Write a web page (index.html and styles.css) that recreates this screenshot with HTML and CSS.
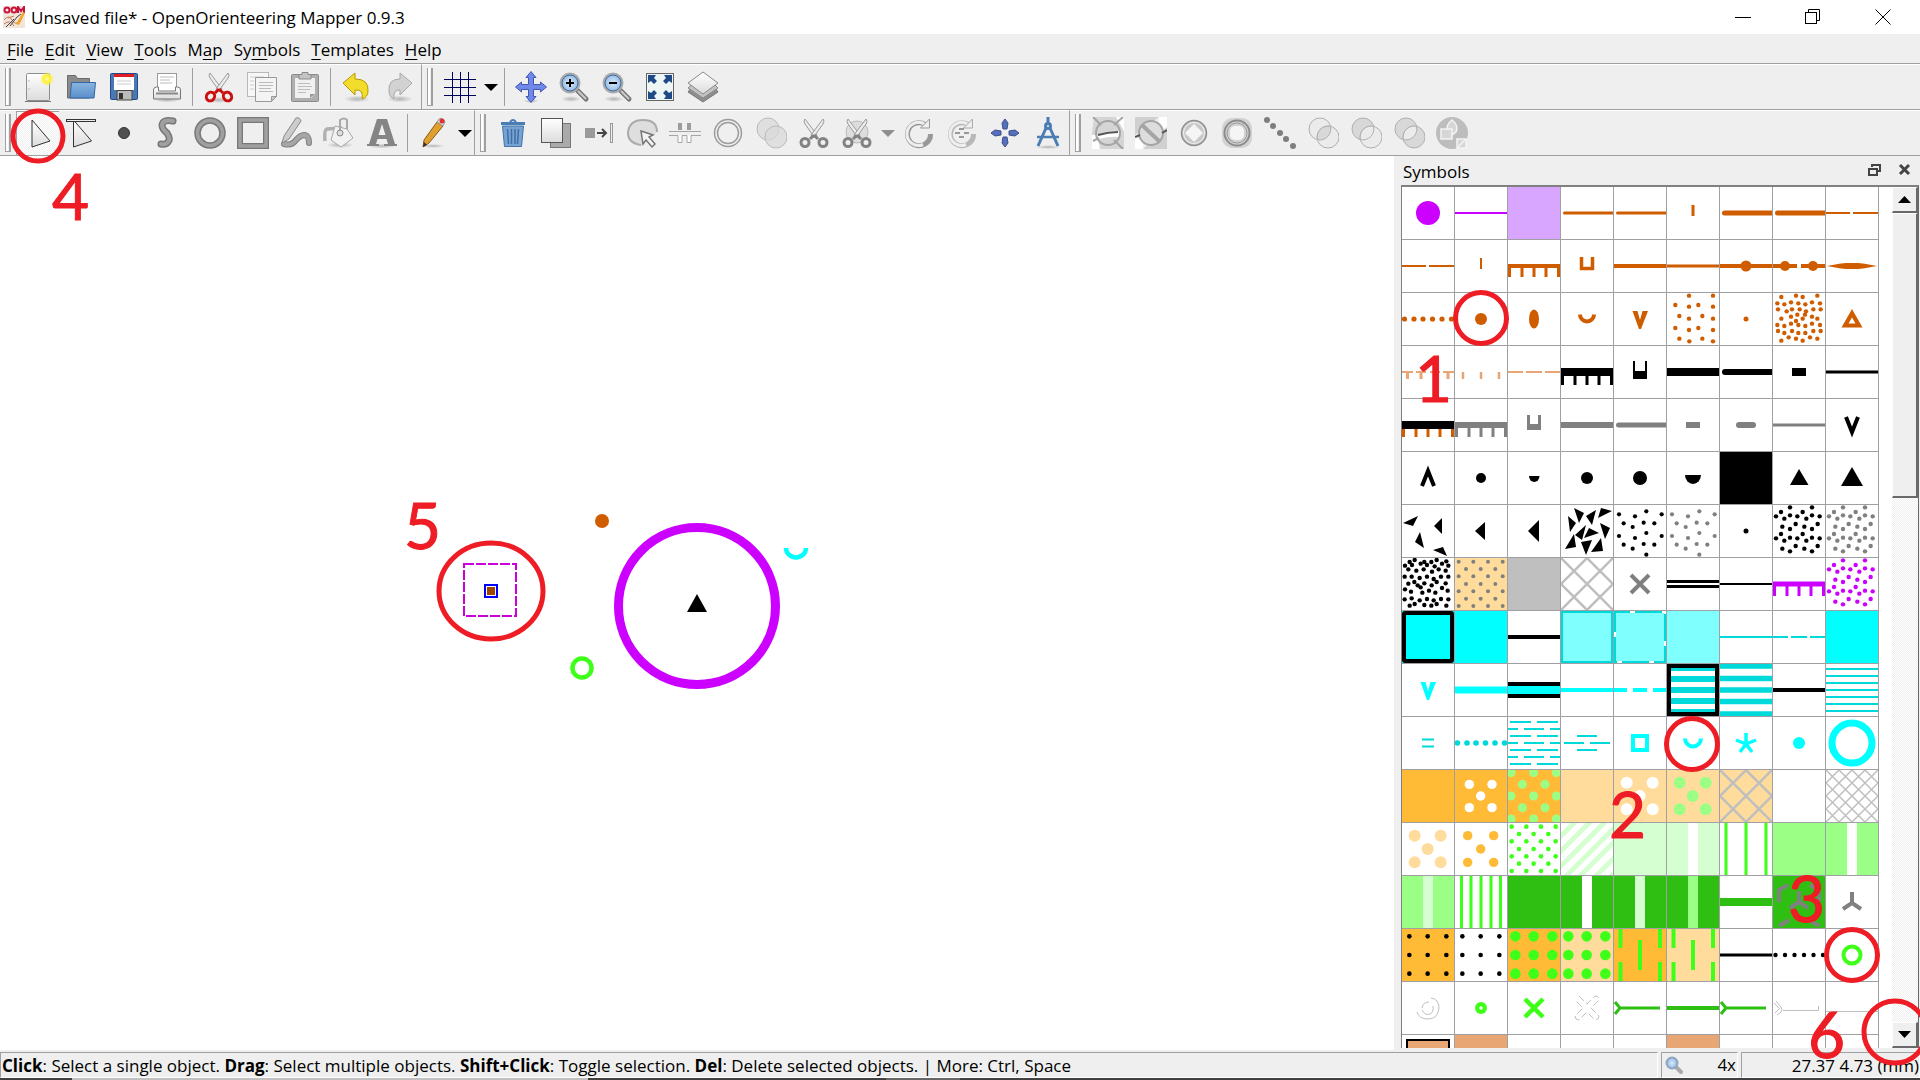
FILE: index.html
```html
<!DOCTYPE html>
<html lang="en">
<head>
<meta charset="utf-8">
<title>Unsaved file* - OpenOrienteering Mapper 0.9.3</title>
<link rel="stylesheet" href="styles.css">
</head>
<body>
<svg class="defs" aria-hidden="true">
  <defs>
    <linearGradient id="paper" x2="0" y2="1"><stop offset="0" stop-color="#fff"/><stop offset="1" stop-color="#dcdcdc"/></linearGradient>
    <linearGradient id="blue" x2="0" y2="1"><stop offset="0" stop-color="#8ab4e0"/><stop offset="1" stop-color="#5a8fcb"/></linearGradient>
    <radialGradient id="glow"><stop offset="0" stop-color="#fffcb0"/><stop offset=".5" stop-color="#fdf02c"/><stop offset="1" stop-color="#fdf02c" stop-opacity="0"/></radialGradient>
    <radialGradient id="lens"><stop offset="0" stop-color="#dcebfa"/><stop offset="1" stop-color="#8fb6e2"/></radialGradient>
    <radialGradient id="shade"><stop offset="0" stop-color="#000" stop-opacity=".25"/><stop offset="1" stop-color="#000" stop-opacity="0"/></radialGradient>
    <g id="blades" fill="#ececec" stroke="#9a9a9a"><path d="M7 2q-2 2 0 5l10 14 2-3z"/><path d="M25 2q2 2 0 5L15 21l-2-3z"/></g>
    <g id="discs" stroke="#b9b9b9"><circle cx="13" cy="12" r="11" fill="#d9d9d9" fill-opacity=".7"/><circle cx="21" cy="20" r="11" fill="#d9d9d9" fill-opacity=".7"/></g>
  </defs>
</svg>

<header class="titlebar">
  <svg class="logo" width="22" height="22" viewBox="0 0 22 22"><rect width="22" height="22" fill="#f2e4d8"/><g fill="none" stroke="#c8143c" stroke-width="2"><circle cx="4" cy="4" r="2.5"/><circle cx="11" cy="4" r="2.5"/><path d="M15 7V1l3 4 3-4v6"/></g><path d="M1 14q5-6 8 0t9 1M1 18q6-5 10 2M5 12l6-2" stroke="#c77b5c" fill="none"/><path d="M7 20l7-9 4-3M3 21l8-8" stroke="#444" fill="none"/><path d="M13 18l7-12 2 1-6 12z" fill="#f0a32a"/></svg>
  <h1>Unsaved file* - OpenOrienteering Mapper 0.9.3</h1>
  <div class="window-buttons">
    <button aria-label="Minimize"><svg width="16" height="16"><path d="M0 8.500h16" stroke="#000"/></svg></button>
    <button aria-label="Restore"><svg width="16" height="16" fill="none" stroke="#000"><rect x=".5" y="3.500" width="11" height="11"/><path d="M3.500 3V.5h11v11H12"/></svg></button>
    <button aria-label="Close"><svg width="16" height="16"><path d="M.5 .5l15 15M15.500.5l-15 15" stroke="#000"/></svg></button>
  </div>
</header>

<nav class="menubar">
  <button><u>F</u>ile</button><button><u>E</u>dit</button><button><u>V</u>iew</button><button><u>T</u>ools</button><button>M<u>a</u>p</button><button>Sy<u>m</u>bols</button><button><u>T</u>emplates</button><button><u>H</u>elp</button>
</nav>

<div class="toolrow">
  <div class="toolbar">
    <button aria-label="New"><svg viewBox="0 0 32 32"><rect x="4.500" y="2.500" width="23" height="27" rx="1" fill="url(#paper)" stroke="#8e8e8e"/><path d="M3 30.500h26" stroke="#777"/><path d="M7 9v2m0 6v2" stroke="#bbb"/><circle cx="25" cy="8" r="7" fill="url(#glow)"/></svg></button>
    <button aria-label="Open"><svg viewBox="0 0 32 32"><path d="M2.500 27V4.500h8l2 3h12V27z" fill="#8b8b8b" stroke="#6b6b6b"/><path d="M6.500 11.500h24l-1.500 15.500H5z" fill="url(#blue)" stroke="#3465a4"/></svg></button>
    <button aria-label="Save"><svg viewBox="0 0 32 32"><rect x="2.500" y="2.500" width="27" height="26" rx="1" fill="#4a78b5" stroke="#204a87"/><rect x="6" y="3" width="20" height="16" fill="#fff"/><path d="M6 4.500h20" stroke="#e02020" stroke-width="3"/><path d="M9 10h14M9 13h14" stroke="#ccc"/><rect x="9" y="19.500" width="15" height="9.500" fill="#bbb" stroke="#444"/><rect x="11" y="22" width="4" height="6" fill="#333"/></svg></button>
    <button aria-label="Print"><svg viewBox="0 0 32 32"><ellipse cx="16" cy="29" rx="14" ry="2.500" fill="url(#shade)"/><rect x="6.500" y="2.500" width="19" height="18" fill="#fff" stroke="#999"/><path d="M9 6h14M9 9h10M9 12h12" stroke="#bbb"/><path d="M2.500 19q0-3 3-3h2v4h17v-4h2q3 0 3 3v9h-27z" fill="url(#paper)" stroke="#777"/><path d="M5 22.500h22" stroke="#888" stroke-width="2"/></svg></button>
    <hr>
    <button aria-label="Cut"><svg viewBox="0 0 32 32"><ellipse cx="16" cy="29" rx="13" ry="3" fill="url(#shade)"/><use href="#blades"/><g fill="none" stroke="#cc1010" stroke-width="3"><path d="M16 18l-4 4M16 18l4 4"/><ellipse cx="7.500" cy="25.500" rx="4" ry="4.500" transform="rotate(35 7.500 25.500)"/><ellipse cx="24.500" cy="25.500" rx="4" ry="4.500" transform="rotate(-35 24.500 25.500)"/></g></svg></button>
    <button aria-label="Copy"><svg viewBox="0 0 32 32"><rect x="1.500" y="1.500" width="21" height="24" fill="#f7f7f7" stroke="#b8b8b8"/><path d="M4 6h14M4 10h4M4 14h4M4 18h4" stroke="#ccc"/><path d="M9.500 6.500h21v19l-5 5h-16z" fill="#f4f4f4" stroke="#999"/><path d="M13 11.500h14M13 14.500h14M13 17.500h12M13 20.500h14" stroke="#bbb"/><path d="M25.500 30v-4.500h5z" fill="#ccc" stroke="#999"/></svg></button>
    <button aria-label="Paste"><svg viewBox="0 0 32 32"><rect x="2.500" y="3.500" width="27" height="27" rx="1" fill="#aeaeae" stroke="#8c8c8c"/><path d="M6 7h20v16l-4 4H6z" fill="#f0f0f0"/><path d="M10 3.500h3v-2h6v2h3V8H10z" fill="#c5c5c5" stroke="#8a8a8a"/><path d="M9 12.500h12M9 15.500h14M9 18.500h12M9 21.500h8" stroke="#bdbdbd"/><path d="M21 27v-4h5z" fill="#999"/></svg></button>
    <hr>
    <button aria-label="Undo"><svg viewBox="0 0 32 32"><ellipse cx="16" cy="28" rx="13" ry="3.500" fill="url(#shade)"/><path d="M2 12L14 2v6q14 0 13 12 0 6-6 8 2-10-7-9v5z" fill="#f2dc2c" stroke="#b79a00"/></svg></button>
    <button aria-label="Redo"><svg viewBox="0 0 32 32"><ellipse cx="16" cy="28" rx="13" ry="3.500" fill="url(#shade)"/><path d="M28 12L16 2v6Q4 8 5 20q0 6 5 8-1-10 6-9v5z" fill="#d2d2d2" stroke="#a8a8a8"/></svg></button>
  </div>
  <div class="toolbar wide">
    <button aria-label="Grid"><svg viewBox="0 0 32 32"><path d="M0 8.500h32M0 16.500h32M0 24.500h32M8.500 1v31M16.500 1v31M24.500 1v31" stroke="#00005c"/></svg></button>
    <button class="drop" aria-label="Grid options"><svg viewBox="0 0 14 7"><path d="M0 0h14L7 7z"/></svg></button>
    <hr>
    <button aria-label="Pan"><svg viewBox="0 0 32 32"><ellipse cx="16" cy="30" rx="8" ry="2" fill="url(#shade)"/><path d="M16 .5l5 6h-2.500v7h7V11l6 5-6 5v-2.500h-7v7H21l-5 6-5-6h2.500v-7h-7V21l-6-5 6-5v2.500h7v-7H11z" fill="#7088e8" stroke="#4256b4"/></svg></button>
    <button aria-label="Zoom in"><svg viewBox="0 0 32 32"><ellipse cx="13" cy="28" rx="10" ry="3" fill="url(#shade)"/><path d="M19 19l9 9" stroke="#777" stroke-width="5" stroke-linecap="round"/><path d="M20 20l8 8" stroke="#ccc" stroke-width="2"/><circle cx="12" cy="12" r="9" fill="url(#lens)" stroke="#aaa" stroke-width="3"/><circle cx="12" cy="12" r="8" fill="none" stroke="#3b6fae"/><path d="M8 12h8M12 8v8" stroke="#000" stroke-width="2"/></svg></button>
    <button aria-label="Zoom out"><svg viewBox="0 0 32 32"><ellipse cx="13" cy="28" rx="10" ry="3" fill="url(#shade)"/><path d="M19 19l9 9" stroke="#777" stroke-width="5" stroke-linecap="round"/><path d="M20 20l8 8" stroke="#ccc" stroke-width="2"/><circle cx="12" cy="12" r="9" fill="url(#lens)" stroke="#aaa" stroke-width="3"/><circle cx="12" cy="12" r="8" fill="none" stroke="#3b6fae"/><path d="M8 12h8" stroke="#000" stroke-width="2"/></svg></button>
    <button aria-label="Show whole map"><svg viewBox="0 0 32 32"><rect x="2.500" y="2.500" width="27" height="27" fill="#eef5f5" stroke="#666"/><path d="M4 4h8l-2 3 3 3-3 3-3-3-3 2zM28 4h-8l2 3-3 3 3 3 3-3 3 2zM4 28h8l-2-3 3-3-3-3-3 3-3-2zM28 28h-8l2-3-3-3 3-3 3 3 3-2z" fill="#204a87"/></svg></button>
    <button aria-label="Map layers"><svg viewBox="0 0 32 32"><path d="M16 31L1 21l3-4h24l3 4z" fill="#8e8e8e" stroke="#777"/><path d="M16 27L1 17l3-3h24l3 3z" fill="#c2c2c2" stroke="#8a8a8a"/><path d="M16 23L1 12 16 1l15 11z" fill="url(#paper)" stroke="#8a8a8a"/></svg></button>
  </div>
</div>

<div class="toolrow">
  <div class="toolbar">
    <button class="pressed" aria-label="Edit objects"><svg viewBox="0 0 32 32"><path d="M10 3v27l18-6z" fill="url(#paper)" stroke="#333"/></svg></button>
    <button aria-label="Edit lines"><svg viewBox="0 0 32 32"><path d="M8.500 3v27l18-6z" fill="url(#paper)" stroke="#333"/><rect x="1.500" y="2.500" width="29" height="2" fill="#eee" stroke="#333"/></svg></button>
    <button aria-label="Draw point"><svg viewBox="0 0 32 32"><circle cx="16" cy="16" r="5.500" fill="#505050" stroke="#333"/></svg></button>
    <button aria-label="Draw path"><svg viewBox="0 0 32 32"><g fill="none" stroke-linecap="round"><path d="M22 4q-10-2-11 4 0 4 5 8 4 6 1 9-2 3-7 2" stroke="#777" stroke-width="7"/><path d="M22 4q-10-2-11 4 0 4 5 8 4 6 1 9-2 3-7 2" stroke="#a0a0a0" stroke-width="4"/></g></svg></button>
    <button aria-label="Draw circle"><svg viewBox="0 0 32 32" fill="none"><circle cx="16" cy="16" r="12.500" stroke="#787878" stroke-width="6.500"/><circle cx="16" cy="16" r="12.500" stroke="#a0a0a0" stroke-width="3.500"/></svg></button>
    <button aria-label="Draw rectangle"><svg viewBox="0 0 32 32" fill="none"><rect x="3" y="3" width="26" height="26" stroke="#787878" stroke-width="6"/><rect x="3" y="3" width="26" height="26" stroke="#a0a0a0" stroke-width="3.500"/></svg></button>
    <button aria-label="Draw freehand"><svg viewBox="0 0 32 32"><g fill="none" stroke-linecap="round"><path d="M4 27q8 2 12-4 6-7 11-4 2 2 2 7" stroke="#808080" stroke-width="6"/><path d="M4 27q8 2 12-4 6-7 11-4 2 2 2 7" stroke="#a6a6a6" stroke-width="4"/></g><path d="M16 1q4-1 5 3L9 22l-7 4 2-7z" fill="#ccc" stroke="#888"/></svg></button>
    <button aria-label="Paint bucket"><svg viewBox="0 0 32 32"><ellipse cx="17" cy="28" rx="14" ry="3" fill="url(#shade)"/><path d="M2 24q-1-11 2-12l15-1" fill="none" stroke="#b0b0b0" stroke-width="3.500"/><path d="M12 9l12 3 6 9-12 9-10-7z" fill="#f2f2f2" stroke="#aaa"/><path d="M17 13V3q4-3 7 0v9" fill="none" stroke="#aaa" stroke-width="2"/><circle cx="17" cy="16" r="3" fill="#ddd" stroke="#888"/></svg></button>
    <button aria-label="Write text"><svg viewBox="0 0 32 32"><ellipse cx="16" cy="29" rx="14" ry="2.500" fill="url(#shade)"/><path d="M11 2h10l8 25h2v2H18v-2h4l-1.500-5h-9L10 27h3v2H1v-2h2zM16 7l-3.500 11h7z" fill="#858585" fill-rule="evenodd"/></svg></button>
    <hr>
    <button aria-label="Pencil"><svg viewBox="0 0 32 32"><ellipse cx="15" cy="29" rx="12" ry="2" fill="url(#shade)"/><path d="M19 5l6 4L11 26l-6 4 1-7z" fill="#e0a030" stroke="#8a5a10"/><path d="M19 5l2-3q4-2 6 3l-2 4z" fill="#d8d8d8" stroke="#999"/><circle cx="24" cy="4" r="2.500" fill="#e23232"/><path d="M5 30l1-5 3 3z" fill="#333"/></svg></button>
    <button class="drop" aria-label="Pencil options"><svg viewBox="0 0 14 7"><path d="M0 0h14L7 7z"/></svg></button>
  </div>
  <div class="toolbar">
    <button aria-label="Delete"><svg viewBox="0 0 32 32"><path d="M5.500 9h21l-2 20.500h-17z" fill="#77a3d3" stroke="#4273a9"/><path d="M10.500 12l1 15M14.500 12v15M18 12v15M21.500 12l-1 15" stroke="#3f6fa8" stroke-width="1.500"/><path d="M4 6.500h24" stroke="#4b7db5" stroke-width="3"/><path d="M13 5q3-4 6 0" stroke="#4b7db5" fill="none" stroke-width="2"/></svg></button>
    <button aria-label="Duplicate"><svg viewBox="0 0 32 32"><rect x="10.500" y="6.500" width="20" height="24" fill="#aaa" stroke="#777"/><rect x="1.500" y="1.500" width="21" height="24" fill="url(#paper)" stroke="#555"/></svg></button>
    <button aria-label="Switch symbol"><svg viewBox="0 0 32 32"><rect x="2" y="11" width="10" height="10" fill="#9a9a9a"/><path d="M14 16h8M19 12l4 4-4 4" fill="none" stroke="#444" stroke-width="2"/><rect x="27.500" y="6.500" width="2" height="19" fill="#eee" stroke="#999"/></svg></button>
    <button aria-label="Fill"><svg viewBox="0 0 32 32"><path d="M15 28Q2 26 2 16 3 3 17 3t14 12" fill="#dedede" stroke="#aaa" stroke-width="2"/><path d="M15 14l12 4-4 2 6 7-3 3-6-7-3 4z" fill="#f4f4f4" stroke="#777" stroke-width="1.500"/></svg></button>
    <button aria-label="Switch dashes"><svg viewBox="0 0 32 32"><path d="M0 14.500h32M0 18.500h9v7h4v-7h5v7h4v-7h10" fill="#fff" stroke="#a5a5a5"/><path d="M9 6h4v7H9zM18 6h4v7h-4z" fill="#9c9c9c"/></svg></button>
    <button aria-label="Connect"><svg viewBox="0 0 32 32" fill="none" stroke="#9c9c9c"><circle cx="16" cy="16" r="13.500" stroke-width="1.500"/><circle cx="16" cy="16" r="10.500" stroke-width="1.500"/></svg></button>
    <button aria-label="Boolean union"><svg viewBox="0 0 32 32"><use href="#discs"/></svg></button>
    <button aria-label="Cut object"><svg viewBox="0 0 32 32"><use href="#blades"/><g fill="none" stroke="#828282" stroke-width="3"><path d="M16 18l-4 4M16 18l4 4"/><circle cx="7" cy="25.500" r="4"/><circle cx="25" cy="25.500" r="4"/></g></svg></button>
    <button aria-label="Cut hole"><svg viewBox="0 0 32 32"><circle cx="16" cy="15" r="11" fill="#ddd" stroke="#bbb"/><use href="#blades"/><g fill="none" stroke="#828282" stroke-width="3"><path d="M16 18l-4 4M16 18l4 4"/><circle cx="7" cy="25.500" r="4"/><circle cx="25" cy="25.500" r="4"/></g></svg></button>
    <button class="drop off" aria-label="Cut hole options"><svg viewBox="0 0 14 7"><path d="M0 0h14L7 7z"/></svg></button>
    <button aria-label="Rotate"><svg viewBox="0 0 32 32" fill="none"><path d="M22 7.500A11.500 11.500 0 1 0 27.500 17" stroke="#999" stroke-width="5"/><path d="M22 7.500A11.500 11.500 0 1 0 20 27.500" stroke="#eee" stroke-width="3"/><path d="M26.500 2v9h-9z" fill="#eee" stroke="#999"/></svg></button>
    <button aria-label="Rotate pattern"><svg viewBox="0 0 32 32" fill="none"><path d="M22 7.500A11.500 11.500 0 1 0 27.500 17" stroke="#b8b8b8" stroke-width="5"/><path d="M22 7.500A11.500 11.500 0 1 0 20 27.500" stroke="#eee" stroke-width="3"/><path d="M26.500 2v9h-9z" fill="#eee" stroke="#aaa"/><path d="M13 12h5M9 16h5M18 16h5M13 20h5" stroke="#999" stroke-width="2"/></svg></button>
    <button aria-label="Scale"><svg viewBox="0 0 32 32" fill="#5870bc" stroke="#3c4f8e"><path d="M16 2l3 4-1 6h-4l-1-6zM16 30l3-4-1-6h-4l-1 6zM2 16l4-3 6 1v4l-6 1zM30 16l-4-3-6 1v4l6 1z"/></svg></button>
    <button aria-label="Measure"><svg viewBox="0 0 32 32" fill="none" stroke="#4b7db5" stroke-width="3"><ellipse cx="16" cy="30" rx="13" ry="2" fill="url(#shade)" stroke="none"/><path d="M16 0v8M14 11L6 29M18 11l8 18"/><circle cx="16" cy="9" r="2.500"/><path d="M5 20h22" stroke-width="2.500"/></svg></button>
  </div>
  <div class="toolbar wide">
    <button aria-label="Cut away"><svg viewBox="0 0 32 32"><path d="M2 0h22l8 14v18H8q-8-6-8-16z" fill="#d5d5d5"/><path d="M24 0h8v14zM0 18h5q2 8 3 14H0z" fill="#fff"/><path d="M5 18q11-5 22-4v6q-12-1-22 3z" fill="#fff"/><g fill="none" stroke="#a5a5a5" stroke-width="2"><path d="M1 0l8 8M22 8l9-8M1 24l6-3M22 23l9 9"/><circle cx="16" cy="16" r="12"/></g><path d="M6 18q10-3 20-3" fill="none" stroke="#555" stroke-width="2"/></svg></button>
    <button aria-label="Cut out"><svg viewBox="0 0 32 32"><path d="M0 0h24L0 18zM32 32H8l24-22z" fill="#d0d0d0"/><path d="M24 0h8v10l-8 4zM0 20l8 4v8H0z" fill="#fff"/><circle cx="16" cy="16" r="12" fill="#ddd" stroke="#a5a5a5" stroke-width="2"/><path d="M7 8l18 17" stroke="#a5a5a5" stroke-width="4"/><path d="M0 20l5-2M27 16l5-3" stroke="#555" stroke-width="2"/></svg></button>
    <button aria-label="Grow"><svg viewBox="0 0 32 32"><circle cx="16" cy="16" r="12.500" fill="#c8c8c8" stroke="#909090" stroke-width="1.500"/><circle cx="16" cy="16" r="10.500" fill="none" stroke="#f2f2f2"/><path d="M16 7l9 9-9 9-9-9z" fill="#f5f5f5"/></svg></button>
    <button aria-label="Shrink"><svg viewBox="0 0 32 32"><rect x="1" y="1" width="30" height="30" rx="10" fill="#d2d2d2"/><circle cx="16" cy="16" r="12.500" fill="#d2d2d2" stroke="#8c8c8c" stroke-width="2"/><circle cx="16" cy="16" r="10" fill="none" stroke="#999"/><rect x="9" y="9" width="14" height="14" rx="5" fill="#f5f5f5"/></svg></button>
    <button aria-label="Distribute points"><svg viewBox="0 0 32 32" fill="#7e7e7e"><circle cx="3" cy="3" r="3"/><circle cx="9" cy="9" r="3"/><circle cx="16" cy="16" r="3"/><circle cx="22" cy="22" r="3"/><circle cx="29" cy="29" r="3"/></svg></button>
    <button aria-label="Intersection"><svg viewBox="0 0 32 32" fill="#ebebeb" stroke="#b0b0b0"><circle cx="13" cy="12" r="11"/><circle cx="21" cy="20" r="11"/><path d="M23.500 9.300A11 11 0 0 1 10.500 22.700 11 11 0 0 1 23.500 9.300z" fill="#d8d8d8"/></svg></button>
    <button aria-label="Difference"><svg viewBox="0 0 32 32" fill="#ebebeb" stroke="#b0b0b0"><circle cx="13" cy="12" r="11" fill="#d8d8d8"/><circle cx="21" cy="20" r="11"/><path d="M23.500 9.300A11 11 0 0 1 10.500 22.700 11 11 0 0 1 23.500 9.300z"/></svg></button>
    <button aria-label="Merge"><svg viewBox="0 0 32 32" fill="#d8d8d8" stroke="#b0b0b0"><circle cx="13" cy="12" r="11"/><circle cx="21" cy="20" r="11"/><path d="M23.500 9.300A11 11 0 0 1 10.500 22.700 11 11 0 0 1 23.500 9.300z" fill="#ebebeb"/></svg></button>
    <button aria-label="Convert"><svg viewBox="0 0 32 32"><circle cx="16" cy="16" r="16" fill="#bdbdbd"/><g fill="#d6d6d6" stroke="#f4f4f4" stroke-width="1.500"><path d="M16 3q-7 5-4 12l4 3 4-3q3-7-4-12z"/><rect x="5" y="12" width="11" height="10"/><rect x="21" y="22" width="9" height="9"/><path d="M21 31l9-9"/></g></svg></button>
  </div>
</div>

<main class="workspace">
  <svg class="map">
    <circle cx="602" cy="365" r="7" fill="#d05c00"/>
    <circle cx="697" cy="450" r="78.500" fill="none" stroke="#cc00ff" stroke-width="9"/>
    <path d="M697 438l10 18h-20z"/>
    <path d="M786 392a10 9.500 0 0 0 20 0" fill="none" stroke="#0ff" stroke-width="4.500"/>
    <circle cx="582" cy="512" r="9.500" fill="none" stroke="#3dff17" stroke-width="4.500"/>
    <rect x="464" y="408" width="52" height="52" fill="none" stroke="#cc00dd" stroke-width="2" stroke-dasharray="10 2"/>
    <rect x="485" y="429" width="12" height="12" fill="#fff" stroke="#00f" stroke-width="2"/>
    <rect x="487" y="431" width="8" height="8" fill="#9c4600"/>
  </svg>
  <aside class="dock">
    <div class="dock-title">
      <h2>Symbols</h2>
      <button aria-label="Float"><svg width="13" height="13" fill="none" stroke="#444" stroke-width="2"><path d="M4 4V2h8v6h-2"/><rect x="1" y="6" width="8" height="6"/></svg></button>
      <button aria-label="Close panel"><svg width="13" height="13"><path d="M2 2l9 9M11 2l-9 9" stroke="#444" stroke-width="3"/></svg></button>
    </div>
    <div class="symbols">
      <div class="palette" id="palette"></div>
      <div class="scroll">
        <button aria-label="Scroll up"><svg width="13" height="7"><path d="M0 7h13L6.500 0z"/></svg></button>
        <div class="thumb"></div>
        <button class="down" aria-label="Scroll down"><svg width="13" height="7"><path d="M0 0h13L6.500 7z"/></svg></button>
      </div>
    </div>
    <svg class="marks">
      <circle cx="87" cy="162" r="25.500"/><circle cx="298" cy="588" r="25.500"/><circle cx="458" cy="799" r="25.500"/><ellipse cx="501" cy="876" rx="31" ry="31"/>
      <text x="21" y="246">1</text><text x="215" y="682">2</text><text x="394" y="766">3</text><text x="414" y="902">6</text>
    </svg>
  </aside>
  <svg class="marks">
    <circle cx="38" cy="-20" r="25"/><ellipse cx="491" cy="435" rx="52" ry="48"/>
    <text x="52" y="64">4</text><text x="404" y="393">5</text>
  </svg>
</main>

<footer class="statusbar">
  <p class="hint"><b>Click</b>: Select a single object. <b>Drag</b>: Select multiple objects. <b>Shift+Click</b>: Toggle selection. <b>Del</b>: Delete selected objects. | More: Ctrl, Space</p>
  <div class="zoom"><svg width="18" height="18" viewBox="0 0 18 18"><path d="M11 11l5 5" stroke="#aaa" stroke-width="4" stroke-linecap="round"/><circle cx="7" cy="7" r="5.500" fill="url(#lens)" stroke="#8fa5c0" stroke-width="2"/></svg><span>4x</span></div>
  <div class="coords">27.37 4.73 (mm)</div>
</footer>
<div class="taskbar"></div>
<script src="script.js"></script>
</body>
</html>
```
FILE: styles.css
```css
*, *::before { box-sizing: border-box; }
body {
  margin: 0;
  height: 100vh;
  display: flex;
  flex-direction: column;
  overflow: hidden;
  background: #efefef;
  color: #000;
  font: 17px/24px "Open Sans", "Noto Sans", sans-serif;
}
h1, h2, p { margin: 0; font: inherit; }
button { border: 0; padding: 0; background: none; font: inherit; color: inherit; display: flex; align-items: center; justify-content: center; }
svg { display: block; flex: none; }
.defs { position: absolute; width: 0; height: 0; }

.titlebar { display: flex; align-items: center; height: 34px; padding: 0 2px 0 3px; background: #fff; flex: none; }
.titlebar h1 { flex: 1; margin-left: 6px; padding-top: 1px; white-space: nowrap; }
.window-buttons { display: flex; }
.window-buttons button { width: 70px; height: 34px; }

.menubar { display: flex; gap: 11px; height: 29px; padding: 2px 7px 0; align-items: center; flex: none; }
.menubar button { display: block; }
.menubar u { text-underline-offset: 3px; text-decoration-thickness: 1px; }

.toolrow { display: flex; height: 46px; border-top: 1px solid #a0a0a0; flex: none; }
.toolbar { display: flex; align-items: center; border-top: 1px solid #fff; border-right: 1px solid #a0a0a0; }
.toolbar.wide { flex: 1; border-right: 0; }
.toolbar::before { content: ""; width: 6px; height: 38px; margin: 0 5px; border: solid #a0a0a0; border-width: 0 1px 1px; box-shadow: inset 2px 0 #fff, inset -1px 0 #a0a0a0; }
.toolbar button { width: 43px; height: 44px; }
.toolbar button svg { width: 32px; height: 32px; }
.toolbar button.drop { width: 19px; }
.toolbar button.drop svg { width: 14px; height: 7px; }
.toolbar .off { opacity: .4; }
.toolbar hr { width: 1px; height: 38px; margin: 0 4px; border: 0; background: #a0a0a0; }
.pressed, .scroll { background: repeating-conic-gradient(#fff 0 25%, #efefef 0 50%) 0 0 / 2px 2px; }
.pressed { box-shadow: inset 1px 1px #a0a0a0; }

.workspace { flex: 1; min-height: 0; display: flex; position: relative; border-top: 1px solid #a0a0a0; background: #fff; }
.map { flex: 1; min-width: 0; height: 100%; }
.dock { width: 526px; flex: none; position: relative; display: flex; flex-direction: column; background: #efefef; padding: 0 1px 2px 7px; }
.dock-title { display: flex; align-items: center; height: 29px; padding: 2px 8px 0 2px; flex: none; }
.dock-title h2 { flex: 1; }
.dock-title button { width: 29px; margin-bottom: 5px; }
.dock-title button:last-child { width: 14px; margin-left: 8px; }
.symbols { flex: 1; min-height: 0; display: flex; justify-content: space-between; overflow: hidden; background: #fff; border: solid #808080; border-width: 2px 0 0 1px; border-right: 1px solid #696969; }
.palette { display: grid; grid-template-columns: repeat(9, 53px); grid-auto-rows: 53px; }
.palette button { border: solid #a0a0a4; border-width: 0 1px 1px 0; background: #fff; overflow: hidden; }
.palette svg { width: 52px; height: 52px; }
.scroll { width: 26px; display: flex; flex-direction: column; }
.scroll button, .thumb { background: #efefef; border: 1px solid #fff; border-right: 2px solid #696969; border-bottom: 2px solid #696969; }
.scroll button { height: 26px; flex: none; }
.thumb { height: 285px; }
.scroll .down { margin-top: auto; }

.marks { position: absolute; left: 0; top: 0; width: 100%; height: 100%; overflow: visible; pointer-events: none; fill: none; stroke: #ee1c24; stroke-width: 5px; z-index: 2; }
.marks text { font: 64px Lato, sans-serif; fill: #ee1c24; stroke-width: 1px; }

.statusbar { display: flex; gap: 3px; height: 28px; padding-top: 2px; background: #efefef; flex: none; white-space: nowrap; line-height: 26px; }
.statusbar > * { border: 1px solid #a0a0a0; border-right-color: #fff; border-bottom-color: #fff; overflow: hidden; }
.hint { flex: 1; padding-left: 1px; }
.zoom { width: 77px; display: flex; align-items: center; justify-content: space-between; padding: 0 1px 0 3px; }
.coords { width: 179px; text-align: right; }
.taskbar { height: 2px; flex: none; background: linear-gradient(90deg, #404040 0 72px, #c0c0c0 0 588px, #404040 0 886px, #666 0 960px, #404040 0); }
```
FILE: script.js
```js
// Symbol palette: every entry is the SVG content of one 52 x 52 tile.
const BROWN = '#d05c00', TAN = '#e8a675', GRAY = '#808080', SILVER = '#bfbfbf', PURPLE = '#cc00ff';
const CYAN = '#00ffff', TEAL = '#00d9d9', AQUA = '#80ffff', ORANGE = '#ffba36', SAND = '#ffdc9b';
const LIME = '#3dff17', LEAF = '#9cff85', MINT = '#d6ffd1', FOREST = '#2fbf12', BLACK = '#000', WHITE = '#fff';

const path = (d, c, w, extra = '') => `<path d="${d}" fill="none" stroke="${c}" stroke-width="${w}" ${extra}/>`;
const shape = (d, c) => `<path d="${d}" fill="${c}"/>`;
const rect = (x, y, w, h, c) => `<rect x="${x}" y="${y}" width="${w}" height="${h}" fill="${c}"/>`;
const fill = c => rect(0, 0, 52, 52, c);
const dot = (r, c, x = 26, y = 26) => `<circle cx="${x}" cy="${y}" r="${r}" fill="${c}"/>`;
const line = (c, w) => path('M0 26H52', c, w);
const capped = (c, w) => path(`M${2 + w / 2} 26H60`, c, w, 'stroke-linecap="round"');
const dashes = (c, w, list, y = 26) => path(list.map(([a, b]) => `M${a} ${y}H${b}`).join(''), c, w);
const ticks = (c, w, xs, y1, y2) => path(xs.map(x => `M${x} ${y1}V${y2}`).join(''), c, w);
const dots = (r, c, xs, y = 26) => xs.map(x => dot(r, c, x, y)).join('');
const cross = (xs, ys) => ys.flatMap(y => xs.map(x => [x, y]));
// Fine patterns are given in thirds of a pixel.
const fine = (r, c, pts) => pts.map(([x, y]) => dot(r, c, x / 3, y / 3)).join('');
const poly = (c, list) => list.map(p => `<polygon points="${p}" fill="${c}"/>`).join('');
const hatch = (c, w, step) => {
  let d = '';
  for (let k = -52; k <= 52; k += step) d += `M${k} 0l52 52M${k + 52} 0l-52 52`;
  return path(d, c, w);
};
const comb = (c, w, end, tickColor = c) => ticks(tickColor, 3, [1.5, 14, 26, 38, 50.5], 26, end) + line(c, w);

const ROW6 = [2.5, 12, 21, 30.5, 40, 49.5];
const cup = (c, r = 7) => path(`M${26 - r} 21.5a${r} ${r} 0 0 0 ${2 * r} 0`, c, 4);
const vee = c => poly(c, ['18.5,18 23.5,18 26,27 28.5,18 34,18 27,36 25,36']);
const sparse = [[66,8],[138,8],[25,36],[94,36],[66,41],[138,41],[37,69],[106,69],[66,77],[138,77],[25,105],[94,105],[66,111],[138,111],[37,137],[106,137],[67,145],[138,145]];
const dense = [[25,12],[69,8],[89,12],[133,8],[13,31],[54,28],[34,34],[76,31],[97,34],[117,28],[141,31],[15,49],[57,49],[41,55],[80,49],[73,65],[99,55],[121,49],[143,49],[25,77],[54,71],[89,77],[96,65],[117,71],[133,77],[69,84],[13,96],[54,92],[34,99],[76,96],[97,99],[117,92],[141,96],[15,114],[57,114],[34,120],[76,120],[97,120],[121,114],[143,114],[25,143],[47,133],[69,137],[89,143],[111,133],[133,137]];
const boulders = [[15,28],[63,34],[97,19],[143,28],[29,55],[89,53],[121,55],[56,66],[97,84],[15,93],[63,99],[143,93],[29,119],[89,117],[121,119],[56,131],[97,149]];
const stony = [[51,7],[117,7],[24,21],[89,21],[9,34],[51,31],[73,34],[117,31],[140,34],[34,41],[100,41],[68,57],[134,57],[28,65],[94,65],[51,72],[117,72],[51,98],[117,98],[24,87],[89,87],[9,100],[73,100],[140,100],[34,107],[100,107],[68,123],[134,123],[28,131],[94,131],[51,139],[117,139]];
const packed = [[23,12],[38,6],[67,12],[88,12],[104,6],[133,10],[9,23],[30,21],[56,17],[75,21],[98,25],[120,17],[139,23],[19,34],[43,38],[65,34],[90,41],[110,34],[131,38],[8,56],[29,56],[53,60],[75,56],[95,63],[117,56],[139,56],[19,77],[37,72],[47,82],[67,76],[89,82],[104,72],[131,76],[9,94],[27,101],[56,88],[61,104],[81,98],[100,104],[120,90],[137,98],[8,124],[29,121],[53,127],[75,123],[95,127],[117,123],[139,124],[23,143],[38,138],[67,141],[88,143],[104,138],[133,143]];
const lattice = [...cross([11,55,99,143], [11,55,100,144]), ...cross([33,77,121], [33,78,122])];
const five = [[43,43],[111,43],[77,78],[43,113],[111,113]];
const fiveWide = [[38,38],[116,38],[77,78],[38,118],[116,118]];
const quincunx = [...cross([9,77,145], [8,78,147]), ...cross([43,111], [43,113])];
const nine = cross([22,77,133], [22,78,134]);
const stripe = (bg, c) => fill(bg) + rect(21, 0, 10, 52, c);
const orchard = bg => fill(bg) + ticks(LIME, 4, [6.5, 46], 0, 19) + ticks(LIME, 4, [6.5, 46], 33, 52) + ticks(LIME, 4, [26], 11, 41);
const tripod = (x, y) => `M${x} ${y - 11}V${y}l-9 6M${x} ${y}l9 6`;
const fletched = path('M1 20l5 6-5 6M6 26H46', FOREST, 3);

const tiles = [
  dot(12, PURPLE), line(PURPLE, 2), fill('#d9a6ff'), capped(BROWN, 3), capped(BROWN, 3), ticks(BROWN, 3, [26], 18, 29), capped(BROWN, 5), capped(BROWN, 5), dashes(BROWN, 2, [[0, 24], [27, 52]]),

  dashes(BROWN, 2, [[0, 24], [27, 52]]), ticks(BROWN, 2, [26], 18, 29), comb(BROWN, 4, 37), path('M20.5 17V28.5H31.5V17', BROWN, 3.5), line(BROWN, 4), line(BROWN, 3), line(BROWN, 4) + dot(5.5, BROWN), dashes(BROWN, 4, [[0, 24], [28, 52]]) + dots(5, BROWN, [12, 40]), shape('M1 26Q16 23 20 23H32Q36 23 51 26 36 29 32 29H20Q16 29 1 26z', BROWN),

  dots(2.6, BROWN, ROW6), dot(6, BROWN), '<ellipse cx="26" cy="26" rx="5" ry="9.5" fill="#d05c00"/>', cup(BROWN), vee(BROWN), fine(2.2, BROWN, sparse), dot(2.5, BROWN), fine(2.2, BROWN, dense), shape('M26 16L36.5 34.5H15.5z', BROWN) + shape('M26 24.5L29.5 30.5H22.5z', WHITE),

  dashes(TAN, 2, [[0, 11], [14, 24], [28, 38], [41, 52]]) + ticks(TAN, 3, [5.5, 19, 32.5, 46], 26, 33), ticks(TAN, 2.5, [8, 26, 44], 26, 33), dashes(TAN, 2, [[0, 15], [18, 34], [37, 52]]), comb(BLACK, 8, 39), rect(19, 15, 14, 18, BLACK) + rect(21, 15, 10, 10, WHITE), line(BLACK, 8), capped(BLACK, 6), rect(19, 22, 14, 8, BLACK), line(BLACK, 3),

  comb(BLACK, 8, 38, BROWN), comb(GRAY, 6, 38), rect(19, 16, 14, 15, GRAY) + rect(22, 16, 8, 9, WHITE), line(GRAY, 6), capped(GRAY, 5), rect(19, 23, 14, 6, GRAY), path('M19 26H33', GRAY, 6, 'stroke-linecap="round"'), line(GRAY, 3), path('M20 18L26 33 32 18', BLACK, 4),

  path('M20 34L26 19 32 34', BLACK, 4), dot(5, BLACK), shape('M21 24H31.5A5.2 6 0 0 1 21 24z', BLACK), dot(6, BLACK), dot(7, BLACK), shape('M18 23H34A8 9 0 0 1 18 23z', BLACK), fill(BLACK), shape('M26 17L35.5 33H17z', BLACK), shape('M26 15L37 34H15z', BLACK),

  poly(BLACK, ['1,18 16,11 11,21', '32,21 40,13 40,29', '18,27 13,37 22,43', '31,45 41,42 45,51']), poly(BLACK, ['20,26 30,17 30,35']), poly(BLACK, ['20,26 31,15 31,37']), poly(BLACK, ['13,3 23,8 18,18', '25,11 35,5 31,20', '37,13 40,3 51,6', '7,11 15,18 9,27', '25,20 14,30 21,35', '28,23 38,28 23,33', '39,18 49,23 44,34', '13,29 4,44 15,42', '20,37 31,35 25,50', '40,33 42,46 30,47']), fine(2.1, BLACK, boulders), fine(2.1, GRAY, boulders), dot(2.5, BLACK), fine(2.2, BLACK, stony), fine(2.2, GRAY, stony),

  fine(2.2, BLACK, packed), fill(SAND) + fine(2, GRAY, lattice), fill(SILVER), hatch(SILVER, 2.5, 26), path('M17 17L35 35M35 17L17 35', GRAY, 4), path('M0 23.5H52M0 28.5H52', BLACK, 3), line(BLACK, 2), comb(PURPLE, 5, 38), fine(2.2, PURPLE, stony),

  fill(CYAN) + '<rect x="2" y="2" width="48" height="48" rx="1" fill="none" stroke="#000" stroke-width="4"/>', fill(CYAN), line(BLACK, 4), fill(AQUA) + '<rect x="1" y="1" width="50" height="50" fill="none" stroke="#00d9d9" stroke-width="2"/>', fill(WHITE) + rect(2, 2, 48, 48, AQUA) + '<rect x="1" y="1" width="50" height="50" fill="none" stroke="#00d9d9" stroke-width="2" stroke-dasharray="27 5" stroke-dashoffset="12"/>', fill(AQUA), line(TEAL, 2), dashes(TEAL, 2, [[0, 15], [18, 34], [37, 52]]), fill(CYAN),

  vee(CYAN), line(CYAN, 7), line(CYAN, 8) + path('M0 20H52M0 32H52', BLACK, 4), line(CYAN, 4), dashes(CYAN, 4, [[0, 13], [19, 33], [39, 52]]), path('M0 5.5H52M0 46.5H52', TEAL, 3) + path('M0 15H52M0 26H52M0 37H52', TEAL, 6) + '<rect x="2" y="2" width="48" height="48" fill="none" stroke="#000" stroke-width="4"/>', path('M0 2H52M0 14.5H52M0 26H52M0 37.5H52M0 50H52', TEAL, 5.5), line(BLACK, 4), path([5, 12, 19, 26, 33, 40, 47].map(y => `M0 ${y}H52`).join(''), TEAL, 2),

  path('M20 22.5H32M20 29.5H32', TEAL, 2), dots(2.8, TEAL, ROW6), [5, 19, 33, 47].map(y => dashes(TEAL, 2, [[2, 23], [29, 50]], y)).join('') + [12, 26, 40].map(y => dashes(TEAL, 2, [[0, 10], [16, 36], [42, 52]], y)).join(''), path('M16 19H36M3 26H23M29 26H49M16 33H36', TEAL, 2), '<rect x="19" y="19" width="14" height="14" fill="none" stroke="#00ffff" stroke-width="4"/>', cup(CYAN, 8), path('M26 27V16M26 27l10-4M26 27l6 8M26 27l-6 8M26 27l-10-4', CYAN, 3.5), dot(6, CYAN), '<circle cx="26" cy="26" r="20" fill="none" stroke="#00ffff" stroke-width="7"/>',

  fill(ORANGE), fill(ORANGE) + fine(4.7, WHITE, five), fill(ORANGE) + fine(4.5, LEAF, quincunx), fill(SAND), fill(SAND) + fine(6, WHITE, fiveWide), fill(SAND) + fine(6, LEAF, fiveWide), fill(SAND) + hatch(SILVER, 2.5, 26), '', hatch(SILVER, 1.5, 13),

  fine(6, SAND, fiveWide), fine(4.7, ORANGE, fiveWide), fine(2.3, LIME, lattice), path('M-4 17L17-4M-4 32L32-4M-4 47L47-4M-2 60L60-2M12 60L60 12M28 60L60 28M43 60L60 43', MINT, 5), fill(MINT), stripe(MINT, WHITE), ticks(LIME, 3, [6, 26, 46], 0, 52), fill(LEAF), stripe(LEAF, WHITE),

  stripe(LEAF, MINT), ticks(LIME, 3, [6.5, 16, 26, 36, 45.5], 0, 52), fill(FOREST), stripe(FOREST, WHITE), stripe(FOREST, MINT), stripe(FOREST, LEAF), line(FOREST, 8), fill(FOREST) + path(tripod(26, 26) + 'M6 26V14l9-5M46 26V14l-9-5M6 50l10-6M46 50l-10-6', GRAY, 4), path(tripod(26, 27), GRAY, 4),

  fill(ORANGE) + fine(2.3, BLACK, nine), fine(2.3, BLACK, nine), fill(ORANGE) + fine(5.3, LIME, nine), fill(SAND) + fine(5.3, LIME, nine), orchard(ORANGE), orchard(SAND), line(BLACK, 3), dots(2.2, BLACK, [2.5, 12, 21.5, 31, 40.5, 50]), '<circle cx="26" cy="26" r="8.5" fill="none" stroke="#3dff17" stroke-width="4"/>',

  path('M29 16Q37 17 37 26 36 37 26 37 17 37 15 30M20 26q1-6 7-6M20 28q3 6 8 4 4-2 3-8', SILVER, 1), dot(6, LIME) + dot(1.7, WHITE), path('M17 17L35 35M35 17L17 35', LIME, 4.5), path('M18 14l8 8 8-8q4 0 4 4l-8 8 8 8q0 4-4 4l-8-8-8 8q-4 0-4-4l8-8-8-8', SILVER, 1, 'stroke-dasharray="7 3"'), fletched, line(FOREST, 4), fletched, path('M1 21l5 5M2 31l5-5M3 19l5 6q2 3 0 5l-4 3M10 28.5H45.5V24', SILVER, 1), path('M0 29.5H52', SILVER, 1),

  rect(4, 4, 44, 48, TAN) + path('M5 52V5H47V52', BLACK, 2), fill(TAN), '', '', '', fill(TAN), '', '', ''
];

document.getElementById('palette').innerHTML = tiles
  .map((art, i) => `<button aria-label="Symbol ${i + 1}"><svg viewBox="0 0 52 52">${art}</svg></button>`)
  .join('');
```
